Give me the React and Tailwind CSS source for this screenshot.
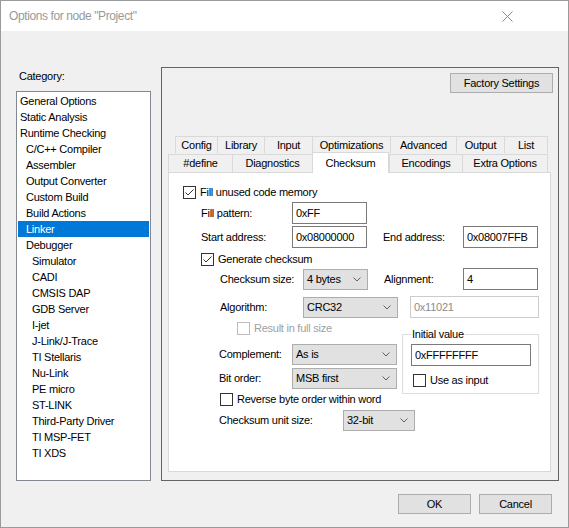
import React from "react";

const categories = [
  ["General Options", 0],
  ["Static Analysis", 0],
  ["Runtime Checking", 0],
  ["C/C++ Compiler", 1],
  ["Assembler", 1],
  ["Output Converter", 1],
  ["Custom Build", 1],
  ["Build Actions", 1],
  ["Linker", 1],
  ["Debugger", 1],
  ["Simulator", 2],
  ["CADI", 2],
  ["CMSIS DAP", 2],
  ["GDB Server", 2],
  ["I-jet", 2],
  ["J-Link/J-Trace", 2],
  ["TI Stellaris", 2],
  ["Nu-Link", 2],
  ["PE micro", 2],
  ["ST-LINK", 2],
  ["Third-Party Driver", 2],
  ["TI MSP-FET", 2],
  ["TI XDS", 2],
];

const topTabs = [
  ["Config", 42],
  ["Library", 47],
  ["Input", 48],
  ["Optimizations", 78],
  ["Advanced", 66],
  ["Output", 48],
  ["List", 44],
];

const frontTabs = [
  ["#define", 64],
  ["Diagnostics", 80],
  ["Checksum", 77],
  ["Encodings", 73],
  ["Extra Options", 86],
];

function CheckBox({ checked, disabled }) {
  const c = disabled ? "#bcbcbc" : "#333333";
  return (
    <svg width="13" height="13" viewBox="0 0 13 13" className="shrink-0">
      <rect x="0.5" y="0.5" width="12" height="12" fill="white" stroke={c} />
      {checked && (
        <path d="M2.5 6.5 L5 9 L10.5 3.5" fill="none" stroke={c} strokeWidth="1" />
      )}
    </svg>
  );
}

function Check({ label, checked, disabled, className = "" }) {
  return (
    <div className={`flex items-center h-[13px] ${className}`}>
      <CheckBox checked={checked} disabled={disabled} />
      <span className={`ml-[4px] leading-[13px] ${disabled ? "text-[#a0a0a0]" : ""}`}>
        {label}
      </span>
    </div>
  );
}

function Field({ value, w, disabled }) {
  return (
    <div
      className={`h-[22px] border bg-white flex items-center pl-[3px] leading-none ${w} ${
        disabled ? "border-[#cccccc] text-[#8c8c8c]" : "border-[#7a7a7a]"
      }`}
    >
      {value}
    </div>
  );
}

function Select({ value, w }) {
  return (
    <div
      className={`h-[21px] border border-[#adadad] bg-[#e1e1e1] flex items-center justify-between pl-[3px] pr-[6px] ${w}`}
    >
      <span>{value}</span>
      <svg width="8" height="5" viewBox="0 0 8 5">
        <path d="M0.5 0.5 L4 4 L7.5 0.5" fill="none" stroke="#606060" strokeWidth="1" />
      </svg>
    </div>
  );
}

export default function App() {
  return (
    <div
      className="w-[569px] h-[528px] bg-[#f0f0f0] border border-[#9a9a9a] flex flex-col text-[11px] tracking-[-0.25px] text-black overflow-hidden"
      style={{ fontFamily: '"Liberation Sans", Arial, sans-serif' }}
    >
      {/* title bar */}
      <div className="h-[30px] bg-white flex items-center justify-between pl-[8px] pr-[55px]">
        <span className="text-[12px] tracking-[-0.4px] text-[#999999]">
          Options for node "Project"
        </span>
        <svg width="11" height="11" viewBox="0 0 11 11" className="mt-[1px]">
          <path d="M0.5 0.5 L10.5 10.5 M10.5 0.5 L0.5 10.5" stroke="#8a8a8a" strokeWidth="1" />
        </svg>
      </div>

      <div className="flex pl-[15px]">
        {/* category column */}
        <div className="w-[135px] mt-[39px] flex flex-col">
          <div className="leading-[13px] pl-[3px]">Category:</div>
          <div className="mt-[8px] h-[390px] border border-[#828790] bg-white p-[1px]">
            {categories.map(([name, level]) => (
              <div
                key={name}
                className={`h-[16px] leading-[16px] whitespace-nowrap ${
                  name === "Linker" ? "bg-[#0078d7] text-white" : ""
                } ${level === 0 ? "pl-[2px]" : level === 1 ? "pl-[8px]" : "pl-[14px]"}`}
              >
                {name}
              </div>
            ))}
          </div>
        </div>

        {/* options panel */}
        <div className="ml-[10px] mt-[36px] w-[398px] h-[414px] border border-[#646464] flex flex-col">
          <div className="flex justify-end pr-[5px] pt-[5px]">
            <div className="w-[103px] h-[20px] border border-[#adadad] bg-[#e1e1e1] flex items-center justify-center">
              Factory Settings
            </div>
          </div>

          <div className="mt-[43px] pl-[13px] flex h-[17px]">
            {topTabs.map(([t, w], i) => (
              <div
                key={t}
                style={{ width: w }}
                className={`h-[17px] border-t border-l border-[#d9d9d9] flex items-center justify-center ${
                  i === topTabs.length - 1 ? "border-r" : ""
                }`}
              >
                {t}
              </div>
            ))}
          </div>
          <div className="pl-[6px] flex items-end h-[19px]">
            {frontTabs.map(([t, w], i) => {
              const sel = t === "Checksum";
              return (
                <div
                  key={t}
                  style={{ width: w }}
                  className={`border-t border-l border-[#d9d9d9] flex justify-center ${
                    i === frontTabs.length - 1 ? "border-r" : ""
                  } ${
                    sel
                      ? "h-[21px] bg-white border-r relative z-10 -mb-px pt-[2px]"
                      : "h-[18px] items-center"
                  }`}
                >
                  {t}
                </div>
              );
            })}
          </div>

          {/* checksum page */}
          <div className="ml-[6px] w-[383px] h-[300px] border border-[#d9d9d9] bg-white flex flex-col">
            <Check label="Fill unused code memory" checked className="mt-[13px] ml-[14px]" />

            <div className="flex items-center mt-[3px] ml-[32px]">
              <span className="w-[91px]">Fill pattern:</span>
              <Field value="0xFF" w="w-[75px]" />
            </div>
            <div className="flex items-center mt-[2px] ml-[32px]">
              <span className="w-[91px]">Start address:</span>
              <Field value="0x08000000" w="w-[75px]" />
              <span className="w-[80px] ml-[16px]">End address:</span>
              <Field value="0x08007FFB" w="w-[75px]" />
            </div>

            <Check label="Generate checksum" checked className="mt-[5px] ml-[32px]" />

            <div className="flex items-center mt-[2px] ml-[51px] h-[22px]">
              <span className="w-[83px]">Checksum size:</span>
              <Select value="4 bytes" w="w-[65px]" />
              <span className="w-[79px] ml-[16px]">Alignment:</span>
              <Field value="4" w="w-[75px]" />
            </div>
            <div className="flex items-center mt-[6px] ml-[51px] h-[22px]">
              <span className="w-[83px]">Algorithm:</span>
              <Select value="CRC32" w="w-[95px]" />
              <span className="ml-[12px]">
                <Field value="0x11021" w="w-[129px]" disabled />
              </span>
            </div>

            <Check label="Result in full size" disabled className="mt-[4px] ml-[68px]" />

            <div className="flex mt-[-1px]">
              <div className="w-[233px] flex flex-col pt-[10px] pl-[50px]">
                <div className="flex items-center">
                  <span className="w-[73px]">Complement:</span>
                  <Select value="As is" w="w-[105px]" />
                </div>
                <div className="flex items-center mt-[3px]">
                  <span className="w-[73px]">Bit order:</span>
                  <Select value="MSB first" w="w-[105px]" />
                </div>
              </div>
              <div className="w-[137px] h-[60px] border border-[#dcdcdc] flex flex-col pl-[8px]">
                <span className="-mt-[7px] bg-white w-fit px-[1px] leading-[13px]">
                  Initial value
                </span>
                <div className="mt-[3px]">
                  <Field value="0xFFFFFFFF" w="w-[120px]" />
                </div>
                <Check label="Use as input" className="mt-[8px] ml-[2px]" />
              </div>
            </div>

            <Check label="Reverse byte order within word" className="mt-[-1px] ml-[51px]" />

            <div className="flex items-center mt-[4px] ml-[50px]">
              <span className="w-[124px]">Checksum unit size:</span>
              <Select value="32-bit" w="w-[72px]" />
            </div>
          </div>
        </div>
      </div>

      {/* dialog buttons */}
      <div className="flex justify-end gap-[8px] pr-[16px] mt-[13px]">
        <div className="w-[73px] h-[20px] border border-[#adadad] bg-[#e1e1e1] flex items-center justify-center">
          OK
        </div>
        <div className="w-[73px] h-[20px] border border-[#adadad] bg-[#e1e1e1] flex items-center justify-center">
          Cancel
        </div>
      </div>
    </div>
  );
}
